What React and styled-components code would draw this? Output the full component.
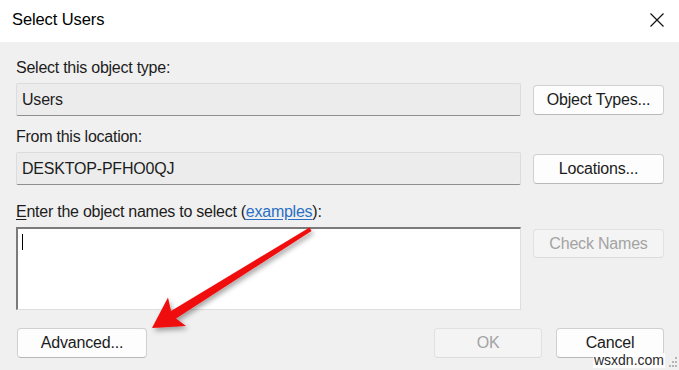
import styled, { createGlobalStyle } from "styled-components";

const Global = createGlobalStyle`
  html, body {
    margin: 0;
    padding: 0;
    background: #f0f0f0;
  }
  body {
    font-family: "Liberation Sans", Arial, sans-serif;
    color: #1a1a1a;
  }
`;

const Dialog = styled.div`
  position: relative;
  width: 679px;
  height: 370px;
  overflow: hidden;
  background: #f0f0f0;
`;

const TitleBar = styled.div`
  height: 42px;
  background: #ffffff;
  display: flex;
  align-items: center;
  justify-content: space-between;
  padding: 0 14px 4px 12px;
  box-sizing: border-box;
`;

const Title = styled.span`
  font-size: 16.5px;
  color: #000;
  letter-spacing: -0.1px;
`;

const CloseIcon = styled.svg`
  width: 16px;
  height: 16px;
  margin-top: 2px;
`;

const Body = styled.div`
  padding: 16px 15px 0 16px;
`;

const Section = styled.div`
  margin-top: ${(p) => p.$top || 0}px;
  display: flex;
  flex-direction: column;
  gap: 5px;
`;

const Label = styled.div`
  font-size: 16px;
  line-height: 20px;
  letter-spacing: -0.25px;
  color: #1c1c1c;
  white-space: nowrap;

  u {
    text-decoration-thickness: 1px;
    text-underline-offset: 2px;
  }
`;

const Link = styled.span`
  color: #2a6fc4;
  text-decoration: underline;
  text-underline-offset: 2px;
`;

const FieldRow = styled.div`
  display: grid;
  grid-template-columns: 505px 131px;
  column-gap: 12px;
  align-items: ${(p) => (p.$top ? "start" : "center")};
`;

const Field = styled.div`
  height: 33px;
  box-sizing: border-box;
  background: #ececec;
  border: 1px solid #dcdcdc;
  border-bottom: 1px solid #8f8f8f;
  border-radius: 2px;
  display: flex;
  align-items: center;
  padding-left: 5px;
  font-size: 16px;
  letter-spacing: -0.2px;
  color: #1c1c1c;
`;

const TextArea = styled.div`
  height: 83px;
  box-sizing: border-box;
  background: #ffffff;
  border-top: 2px solid #7b7b7b;
  border-left: 2px solid #7b7b7b;
  border-right: 1px solid #dedede;
  border-bottom: 1px solid #dedede;
`;

const Caret = styled.span`
  display: block;
  width: 1px;
  height: 16px;
  background: #000;
  margin: 5px 0 0 4px;
`;

const Button = styled.button`
  height: ${(p) => p.$h || 30}px;
  width: ${(p) => (p.$w ? `${p.$w}px` : "auto")};
  margin-top: ${(p) => p.$mt || 0}px;
  box-sizing: border-box;
  border-radius: 4px;
  font-family: "Liberation Sans", Arial, sans-serif;
  font-size: 16px;
  letter-spacing: -0.2px;
  padding: 0;
  background: ${(p) => (p.disabled ? "#f4f4f4" : "#fdfdfd")};
  color: ${(p) => (p.disabled ? "#a3a3a3" : "#1b1b1b")};
  border: 1px solid ${(p) => (p.disabled ? "#e1e1e1" : "#d0d0d0")};
  border-bottom-color: ${(p) => (p.disabled ? "#dcdcdc" : "#b9b9b9")};
`;

const BottomRow = styled.div`
  margin-top: 18px;
  display: flex;
  align-items: center;
  padding-left: 1px;
`;

const Spacer = styled.div`
  flex: 1;
`;

const ButtonGroup = styled.div`
  display: flex;
  gap: 14px;
`;

const Overlay = styled.svg`
  position: absolute;
  left: 0;
  top: 0;
  pointer-events: none;
`;

const Watermark = styled.div`
  position: absolute;
  right: 14px;
  bottom: 2px;
  font-family: "Liberation Sans", Arial, sans-serif;
  font-size: 14px;
  line-height: 15px;
  color: #2b2b2b;
  background: rgba(255, 255, 255, 0.85);
  padding: 0 1px;
`;

const Grip = styled.svg`
  position: absolute;
  right: 1px;
  bottom: 1px;
`;

export default function App() {
  return (
    <Dialog>
      <Global />
      <TitleBar>
        <Title>Select Users</Title>
        <CloseIcon viewBox="0 0 16 16">
          <path d="M1.5 1.5 L14.5 14.5 M14.5 1.5 L1.5 14.5" stroke="#111" strokeWidth="1.2" fill="none" />
        </CloseIcon>
      </TitleBar>
      <Body>
        <Section>
          <Label>Select this object type:</Label>
          <FieldRow>
            <Field>Users</Field>
            <Button>Object Types...</Button>
          </FieldRow>
        </Section>
        <Section $top={11}>
          <Label>From this location:</Label>
          <FieldRow>
            <Field>DESKTOP-PFHO0QJ</Field>
            <Button>Locations...</Button>
          </FieldRow>
        </Section>
        <Section $top={17}>
          <Label>
            <u>E</u>nter the object names to select (<Link>examples</Link>):
          </Label>
          <FieldRow $top>
            <TextArea>
              <Caret />
            </TextArea>
            <Button disabled $mt={2} $h={29}>Check Names</Button>
          </FieldRow>
        </Section>
        <BottomRow>
          <Button $w={130}>Advanced...</Button>
          <Spacer />
          <ButtonGroup>
            <Button disabled $w={108}>OK</Button>
            <Button $w={108}>Cancel</Button>
          </ButtonGroup>
        </BottomRow>
      </Body>

      <Overlay width="679" height="370" viewBox="0 0 679 370">
        <defs>
          <filter id="shadow" x="-20%" y="-20%" width="140%" height="140%">
            <feDropShadow dx="2" dy="3" stdDeviation="2.5" floodColor="#000" floodOpacity="0.35" />
          </filter>
        </defs>
        <polygon
          filter="url(#shadow)"
          fill="#f00a0a"
          points="309.5,227.5 311.5,231 176,318.5 186,326 152,328 168,297.5 171,311"
        />
      </Overlay>

      <Watermark>wsxdn.com</Watermark>
      <Grip width="10" height="14" viewBox="0 0 10 14">
        {[
          [7, 2], [7, 6], [4, 6], [7, 10], [4, 10], [1, 10],
        ].map(([x, y], i) => (
          <rect key={i} x={x} y={y} width="2" height="2" fill="#b5b5b5" />
        ))}
      </Grip>
    </Dialog>
  );
}
